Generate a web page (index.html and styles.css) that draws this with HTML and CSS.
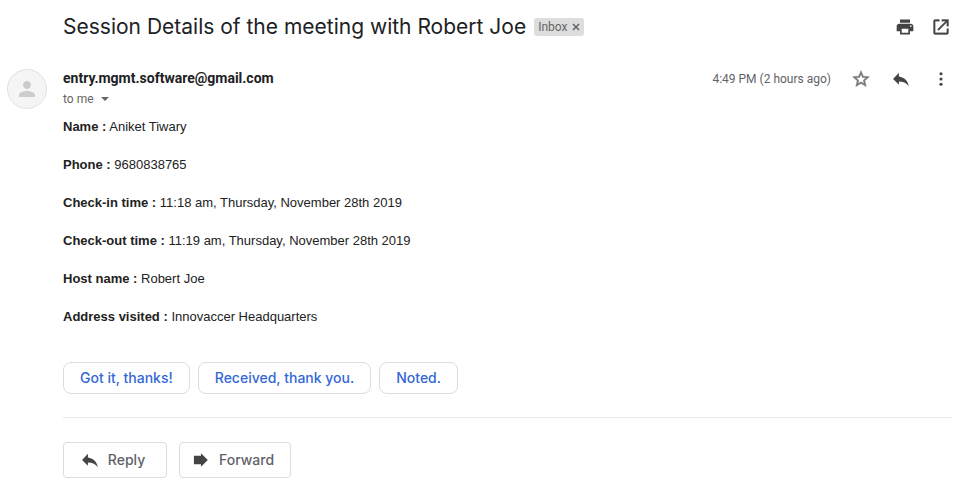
FILE: index.html
```html
<!DOCTYPE html>
<html lang="en">
<head>
<meta charset="utf-8">
<meta name="viewport" content="width=device-width, initial-scale=1">
<title>Session Details of the meeting with Robert Joe</title>
<link rel="stylesheet" href="styles.css">
</head>
<body>
<main class="thread">
  <header class="subject">
    <h1 class="subject-title">Session Details of the meeting with Robert Joe</h1>
    <span class="label">Inbox
      <button class="label-remove" type="button" aria-label="Remove label Inbox"><svg viewBox="0 0 8 8"><path d="M1 1l6 6M7 1L1 7" fill="none" stroke="currentColor" stroke-width="1.6"/></svg></button>
    </span>
    <div class="subject-tools">
      <button class="icon-button" type="button" aria-label="Print all"><svg viewBox="0 0 24 24"><path d="M19 8H5c-1.66 0-3 1.34-3 3v6h4v4h12v-4h4v-6c0-1.66-1.34-3-3-3zm-3 11H8v-5h8v5zm3-7c-.55 0-1-.45-1-1s.45-1 1-1 1 .45 1 1-.45 1-1 1zm-1-9H6v4h12V3z"/></svg></button>
      <button class="icon-button" type="button" aria-label="Open in new window"><svg viewBox="0 0 24 24"><path d="M19 19H5V5h5V3H5a2 2 0 0 0-2 2v14a2 2 0 0 0 2 2h14c1.1 0 2-.9 2-2v-5h-2v5zM13 3v2h4.600l-9.800 9.800 1.400 1.400L19 6.400V11h2V3h-8z" stroke="currentColor" stroke-width=".4"/></svg></button>
    </div>
  </header>

  <article class="message">
    <div class="avatar"><svg viewBox="0 0 24 24"><path d="M12 12c2.210 0 4-1.790 4-4s-1.790-4-4-4-4 1.790-4 4 1.790 4 4 4zm0 2c-2.670 0-8 1.340-8 4v2h16v-2c0-2.660-5.330-4-8-4z"/></svg></div>
    <div class="message-main">
      <header class="message-head">
        <div class="sender">
          <span class="sender-address">entry.mgmt.software@gmail.com</span>
          <button class="recipient" type="button">to me <span class="caret"></span></button>
        </div>
        <div class="message-tools">
          <time class="sent">4:49 PM (2 hours ago)</time>
          <button class="icon-button star" type="button" aria-label="Star"><svg viewBox="0 0 24 24"><path d="M22 9.240l-7.190-.62L12 2 9.190 8.630 2 9.240l5.460 4.730L5.820 21 12 17.270 18.180 21l-1.630-7.030L22 9.240zM12 15.400l-3.760 2.270 1-4.280-3.320-2.880 4.380-.38L12 6.100l1.710 4.040 4.380.38-3.320 2.880 1 4.280L12 15.400z" stroke="currentColor" stroke-width=".6"/></svg></button>
          <button class="icon-button" type="button" aria-label="Reply to sender"><svg viewBox="0 0 24 24"><path d="M9.500 9V4.500L2.500 12l7 7v-4.100c5 0 8.500 1.600 12 5.600-1.500-6-5-10.500-12-11.500z"/></svg></button>
          <button class="icon-button" type="button" aria-label="More"><svg viewBox="0 0 24 24"><circle cx="12" cy="5.700" r="1.900"/><circle cx="12" cy="12" r="1.900"/><circle cx="12" cy="18.300" r="1.900"/></svg></button>
        </div>
      </header>

      <div class="body">
        <p><b>Name :</b> Aniket Tiwary</p>
        <p><b>Phone :</b> 9680838765</p>
        <p><b>Check-in time :</b> 11:18 am, Thursday, November 28th 2019</p>
        <p><b>Check-out time :</b> 11:19 am, Thursday, November 28th 2019</p>
        <p><b>Host name :</b> Robert Joe</p>
        <p><b>Address visited :</b> Innovaccer Headquarters</p>
      </div>

      <div class="suggestions">
        <button class="suggestion" type="button">Got it, thanks!</button>
        <button class="suggestion" type="button">Received, thank you.</button>
        <button class="suggestion" type="button">Noted.</button>
      </div>

      <footer class="actions">
        <button class="action" type="button"><svg viewBox="0 0 24 24"><path d="M9.500 9V4.500L2.500 12l7 7v-4.100c5 0 8.500 1.600 12 5.600-1.500-6-5-10.500-12-11.500z"/></svg>Reply</button>
        <button class="action" type="button"><svg viewBox="0 0 24 24"><path d="M3.500 7H12V4l8.200 8-8.200 8v-3H3.500z"/></svg>Forward</button>
      </footer>
    </div>
  </article>
</main>
</body>
</html>
```
FILE: styles.css
```css
* {
  box-sizing: border-box;
}

body {
  margin: 0;
  background: #fff;
  color: #202124;
  font-family: Roboto, "Liberation Sans", sans-serif;
}

button {
  margin: 0;
  padding: 0;
  border: 0;
  background: none;
  color: inherit;
  font: inherit;
  cursor: pointer;
}

svg {
  display: block;
  fill: currentColor;
}

.thread {
  padding: 12px 6px 8px 7px;
}

.subject {
  display: flex;
  align-items: center;
  height: 30px;
  padding-left: 56px;
}

.subject-title {
  margin: 0 8px 0 0;
  font: 400 21px/28px Inter, sans-serif;
}

.label {
  display: flex;
  align-items: center;
  gap: 5px;
  height: 18px;
  padding: 0 4px;
  border-radius: 3px;
  background: #ddd;
  color: #666;
  font-size: 12px;
}

.label-remove svg {
  width: 8px;
  height: 8px;
}

.subject-tools {
  display: flex;
  gap: 16px;
  margin-left: auto;
  padding-right: 1px;
}

.icon-button {
  color: #444;
}

.icon-button svg {
  width: 20px;
  height: 20px;
}

.star {
  color: #777;
}

.message {
  display: flex;
  gap: 16px;
  margin-top: 27px;
}

.avatar {
  display: grid;
  flex: none;
  place-items: center;
  width: 40px;
  height: 40px;
  border: 1px solid #e0e0e0;
  border-radius: 50%;
  background: #f5f5f5;
  color: #ccc;
}

.avatar svg {
  width: 24px;
  height: 24px;
}

.message-main {
  flex: 1;
  min-width: 0;
}

.message-head {
  display: flex;
  justify-content: space-between;
  align-items: flex-start;
}

.sender {
  display: flex;
  flex-direction: column;
  align-items: flex-start;
}

.sender-address {
  font-size: 14px;
  font-weight: 700;
  line-height: 18px;
}

.recipient {
  display: flex;
  align-items: center;
  gap: 7px;
  color: #666;
  font-size: 12px;
  line-height: 24px;
}

.caret {
  border: 4px solid transparent;
  border-top-color: #666;
  border-bottom: 0;
}

.message-tools {
  display: flex;
  align-items: center;
  gap: 20px;
  padding-right: 1px;
}

.sent {
  color: #5f6368;
  font-size: 12px;
}

.body {
  margin-top: 6px;
  color: #222;
  font: 13px/20px "Liberation Sans", Arial, sans-serif;
}

.body p {
  margin: 0 0 18px;
}

.suggestions {
  display: flex;
  flex-wrap: wrap;
  gap: 8px;
  margin-top: 35px;
  padding-bottom: 23px;
  border-bottom: 1px solid #e8e8e8;
}

.suggestion {
  height: 32px;
  padding: 0 16px;
  border: 1px solid #dadce0;
  border-radius: 8px;
  color: #3367d6;
  font: 500 14px/20px Inter, sans-serif;
}

.actions {
  display: flex;
  gap: 12px;
  margin-top: 24px;
}

.action {
  display: flex;
  align-items: center;
  justify-content: center;
  gap: 8px;
  min-width: 104px;
  height: 36px;
  padding: 0 16px 0 11px;
  border: 1px solid #dadce0;
  border-radius: 4px;
  color: #5f6368;
  font: 500 14px/20px Inter, sans-serif;
}

.action svg {
  width: 20px;
  height: 20px;
  color: #444;
}
```
